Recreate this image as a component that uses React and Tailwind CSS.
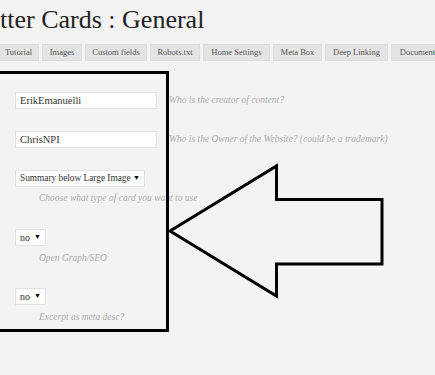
import React from 'react'

const tabs = [
  { label: 'Tutorial', w: 'w-[41px]' },
  { label: 'Images', w: 'w-[40px]' },
  { label: 'Custom fields', w: 'w-[62px]' },
  { label: 'Robots.txt', w: 'w-[50px]' },
  { label: 'Home Settings', w: 'w-[67px]' },
  { label: 'Meta Box', w: 'w-[49px]' },
  { label: 'Deep Linking', w: 'w-[63px]' },
  { label: 'Documentation', w: 'w-[70px]' },
]

function FakeSelect({ value, width, size = 'text-[10px]' }) {
  return (
    <div className={`flex h-[17px] items-center justify-between whitespace-nowrap border border-[#e2e2e2] bg-white pl-[4px] pr-[4px] text-[#333] ${size} ${width}`}>
      <span>{value}</span>
      <span className="text-[7px] leading-none text-black">▼</span>
    </div>
  )
}

function Hint({ children, className = '' }) {
  return <p className={`whitespace-nowrap text-[9.5px] italic text-[#adadad] ${className}`}>{children}</p>
}

export default function App() {
  return (
    <div className="relative h-[375px] w-[435px] overflow-hidden bg-[#f3f3f3] font-['Liberation_Serif',serif]">
      {/* Page title, clipped on the left like the screenshot */}
      <h1 className="ml-[-40px] mt-[3px] h-[34px] whitespace-nowrap text-[26px] leading-[34px] text-[#222]">
        Twitter Cards : General
      </h1>

      {/* Tabs */}
      <div className="ml-[-2px] mt-[7px] flex gap-[3px] whitespace-nowrap">
        {tabs.map(t => (
          <div
            key={t.label}
            className={`flex h-[17px] shrink-0 items-center justify-center border border-[#dedede] bg-[#e4e4e4] text-[8.5px] text-[#555] ${t.w}`}
          >
            {t.label}
          </div>
        ))}
      </div>

      {/* Form rows */}
      <div className="pl-[15px] pt-[31px]">
        <div className="flex items-center gap-[12px]">
          <div className="flex h-[17px] w-[142px] items-center border border-[#e2e2e2] bg-white pl-[4px] text-[10.5px] text-[#333]">
            ErikEmanuelli
          </div>
          <Hint>Who is the creator of content?</Hint>
        </div>

        <div className="mt-[22px] flex items-center gap-[12px]">
          <div className="flex h-[17px] w-[142px] items-center border border-[#e2e2e2] bg-white pl-[4px] text-[10.5px] text-[#333]">
            ChrisNPI
          </div>
          <Hint>Who is the Owner of the Website? (could be a trademark)</Hint>
        </div>

        <div className="mt-[22px]">
          <FakeSelect value="Summary below Large Image" width="w-[130px]" size="text-[9.3px]" />
          <Hint className="ml-[24px] mt-[4px]">Choose what type of card you want to use</Hint>
        </div>

        <div className="mt-[24px]">
          <FakeSelect value="no" width="w-[31px]" />
          <Hint className="ml-[24px] mt-[5px]">Open Graph/SEO</Hint>
        </div>

        <div className="mt-[22px]">
          <FakeSelect value="no" width="w-[31px]" />
          <Hint className="ml-[24px] mt-[5px]">Excerpt as meta desc?</Hint>
        </div>
      </div>

      {/* Annotation drawn over the page */}
      <svg className="pointer-events-none absolute inset-0" width="435" height="375" viewBox="0 0 435 375">
        <rect x="-10" y="72.5" width="177.5" height="258" fill="none" stroke="#000" strokeWidth="3" />
        <polygon
          points="170,231 276.5,166 276.5,199.5 382,199.5 382,264 276.5,264 276.5,296"
          fill="none"
          stroke="#000"
          strokeWidth="3"
          strokeLinejoin="miter"
        />
      </svg>
    </div>
  )
}
